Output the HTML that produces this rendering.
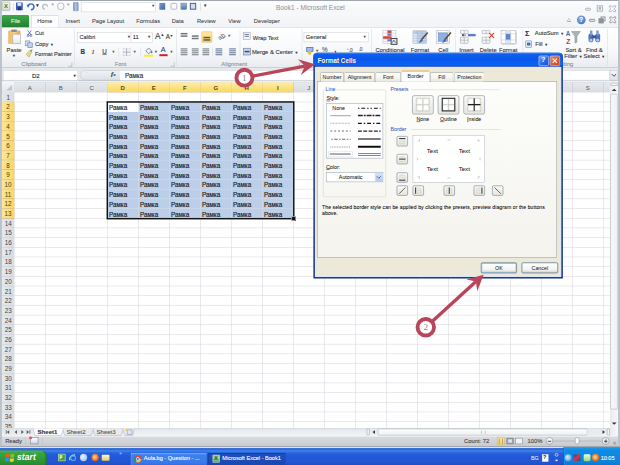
<!DOCTYPE html>
<html><head><meta charset="utf-8">
<style>
html,body{margin:0;padding:0;width:620px;height:465px;overflow:hidden;background:#fff;}
#s{position:absolute;left:0;top:0;width:1280px;height:960px;transform:scale(0.484375);transform-origin:0 0;overflow:hidden;background:#fff;font-family:"Liberation Sans",sans-serif;font-size:12px;color:#222;}
.a{position:absolute;}
.t{position:absolute;white-space:nowrap;-webkit-text-stroke:0.2px currentColor;}
/* window chrome */
#qat{left:0;top:0;width:1280px;height:27px;background:linear-gradient(#fdfdfe,#f4f6f8);border-top:2px solid #9da4ad;box-sizing:border-box;}
#tabs{left:0;top:27px;width:1280px;height:29px;background:linear-gradient(#f7f8fa,#f1f3f6);}
#ribbon{left:0;top:56px;width:1280px;height:85px;background:linear-gradient(#ffffff 0%,#f7f8fa 60%,#e9ecf0 100%);border-top:1px solid #c6cbd1;border-bottom:2px solid #b6bcc5;box-sizing:border-box;}
#fbar{left:0;top:141px;width:1280px;height:29px;background:linear-gradient(#e6e9ec,#e6e9ec 25px,#c6cbd1 25px,#c6cbd1 27px,#eef0f2 27px);}
#lb{left:0;top:0;width:4px;height:921px;background:#bcc2ca;}
#rb{left:1276px;top:0;width:4px;height:921px;background:#bcc2ca;}
/* grid */
#cells{left:30px;top:191px;width:1229px;height:694px;background-color:#fff;}
.gv{position:absolute;top:0;width:1px;height:694px;background:#d6d1dc;}
.gh{position:absolute;left:0;height:1px;width:1229px;background:#d6d1dc;}
#colh{left:30px;top:170px;width:1229px;height:21px;background:linear-gradient(#e6e9ec,#d9dde2);border-top:1px solid #c9ced4;border-bottom:1px solid #b9bec5;box-sizing:border-box;}
#rowh{left:4px;top:191px;width:26px;height:694px;background:linear-gradient(90deg,#e6e9ec,#d9dde2);border-right:1px solid #b9bec5;box-sizing:border-box;}
.ch{position:absolute;top:-1px;width:64px;height:21px;box-sizing:border-box;border-right:1px solid #bfc4ca;text-align:center;line-height:24px;font-size:12.5px;color:#50555c;}
.ch.y{background:linear-gradient(#fdeda6,#f9d961);border-right-color:#e0b54a;border-bottom:1px solid #d4a63a;color:#5b4a10;font-weight:bold;}
.rh{position:absolute;left:0;width:26px;height:20px;box-sizing:border-box;border-bottom:1px solid #c8ccd2;text-align:center;line-height:22px;font-size:13px;color:#3f444b;}
.rh.y{background:linear-gradient(90deg,#fce69a,#f8d862);border-bottom-color:#c9a03e;border-right:1px solid #d4a63a;color:#4a3c10;}
#corner{left:4px;top:170px;width:26px;height:21px;background:linear-gradient(#f3f4f6,#e4e7eb);border-right:1px solid #c5c9cf;border-bottom:1px solid #c5c9cf;box-sizing:border-box;}
#sel{left:222px;top:211px;width:384px;height:240px;background:#bccee8;}
.sv{position:absolute;top:0;width:1px;height:240px;background:#d3deee;}
.sh{position:absolute;left:0;height:1px;width:384px;background:#d3deee;}
#selb{left:220px;top:209px;width:388px;height:244px;border:3px solid #111;box-sizing:border-box;}
.cell{position:absolute;font-size:13px;color:#1a1a1a;line-height:20px;padding-top:2px;-webkit-text-stroke:0.3px #1a1a1a;}
#vsb{left:1259px;top:170px;width:17px;height:729px;background:linear-gradient(90deg,#e9ecef,#f6f7f8);}
#tabbar{left:4px;top:884px;width:1255px;height:15px;background:linear-gradient(#e3e7ec,#f1f3f5);border-top:1px solid #b8bec6;box-sizing:border-box;}
#status{left:0px;top:899px;width:1280px;height:24px;background:linear-gradient(#eceef0 0px,#eceef0 2px,#d8dadd 3px,#c9ccd1 21px,#a3a7ad 22px,#a3a7ad 24px);box-sizing:border-box;}
#task{left:0;top:923px;width:1280px;height:37px;background:linear-gradient(#e4ecfa 0px,#b9d0f5 2px,#3068d4 3px,#2f6ad8 5px,#3a86ee 8px,#2a62da 12px,#2458d8 18px,#2255d2 32px,#1d4cc4 37px);}
.xt{box-sizing:border-box;border:1px solid #919b9c;border-bottom:none;border-radius:3px 3px 0 0;background:linear-gradient(#ffffff,#f3f3ef 60%,#e8e7e0);font-size:11px;color:#111;text-align:center;line-height:19px;}
.xt.sel{background:#fcfcfe;border-top:3px solid #f2a53a;line-height:19px;height:25px;}
.pb{width:44px;height:39px;box-sizing:border-box;border:1.5px solid #566a80;border-radius:4px;background:linear-gradient(#fafaf7,#e8e6dc);box-shadow:inset 0 0 0 1px #fff;}
.pb svg{position:absolute;left:-1px;top:-1px;}
.bb{width:23px;height:21px;box-sizing:border-box;border:1.5px solid #566a80;border-radius:3px;background:linear-gradient(#fafaf7,#e6e4d8);}
.bb svg{position:absolute;left:-1px;top:-1px;}
.btn{box-sizing:border-box;border:1px solid #003c74;border-radius:3px;background:linear-gradient(#ffffff,#f4f3ee 70%,#d6d0c5);font-size:11px;color:#111;text-align:center;line-height:20px;}
.btn.foc{box-shadow:inset 0 0 0 2px #b9d1fa;}

.t.d{-webkit-text-stroke:0.08px currentColor;}
</style></head><body>
<div id="s">
<div class="a" id="qat"></div><div class="a" id="tabs"></div><div class="a" id="ribbon"></div><div class="a" id="fbar"></div><div class="a" id="corner"><svg style="position:absolute;left:0;top:0" width="26" height="21" viewBox="0 0 26 21"><path d="M21 5 L21 17 L9 17Z" fill="#c3c8ce"/></svg></div><div class="a" id="colh"><div class="ch" style="left:0px">A</div><div class="ch" style="left:64px">B</div><div class="ch" style="left:128px">C</div><div class="ch y" style="left:192px">D</div><div class="ch y" style="left:256px">E</div><div class="ch y" style="left:320px">F</div><div class="ch y" style="left:384px">G</div><div class="ch y" style="left:448px">H</div><div class="ch y" style="left:512px">I</div><div class="ch" style="left:576px">J</div><div class="ch" style="left:640px">K</div><div class="ch" style="left:704px">L</div><div class="ch" style="left:768px">M</div><div class="ch" style="left:832px">N</div><div class="ch" style="left:896px">O</div><div class="ch" style="left:960px">P</div><div class="ch" style="left:1024px">Q</div><div class="ch" style="left:1088px">R</div><div class="ch" style="left:1152px">S</div><div class="ch" style="left:1216px">T</div></div><div class="a" id="rowh"><div class="rh" style="top:0px">1</div><div class="rh y" style="top:20px">2</div><div class="rh y" style="top:40px">3</div><div class="rh y" style="top:60px">4</div><div class="rh y" style="top:80px">5</div><div class="rh y" style="top:100px">6</div><div class="rh y" style="top:120px">7</div><div class="rh y" style="top:140px">8</div><div class="rh y" style="top:160px">9</div><div class="rh y" style="top:180px">10</div><div class="rh y" style="top:200px">11</div><div class="rh y" style="top:220px">12</div><div class="rh y" style="top:240px">13</div><div class="rh" style="top:260px">14</div><div class="rh" style="top:280px">15</div><div class="rh" style="top:300px">16</div><div class="rh" style="top:320px">17</div><div class="rh" style="top:340px">18</div><div class="rh" style="top:360px">19</div><div class="rh" style="top:380px">20</div><div class="rh" style="top:400px">21</div><div class="rh" style="top:420px">22</div><div class="rh" style="top:440px">23</div><div class="rh" style="top:460px">24</div><div class="rh" style="top:480px">25</div><div class="rh" style="top:500px">26</div><div class="rh" style="top:520px">27</div><div class="rh" style="top:540px">28</div><div class="rh" style="top:560px">29</div><div class="rh" style="top:580px">30</div><div class="rh" style="top:600px">31</div><div class="rh" style="top:620px">32</div><div class="rh" style="top:640px">33</div><div class="rh" style="top:660px">34</div><div class="rh" style="top:680px">35</div></div><div class="a" id="cells"><div class="gv" style="left:63px"></div><div class="gv" style="left:127px"></div><div class="gv" style="left:191px"></div><div class="gv" style="left:255px"></div><div class="gv" style="left:319px"></div><div class="gv" style="left:383px"></div><div class="gv" style="left:447px"></div><div class="gv" style="left:511px"></div><div class="gv" style="left:575px"></div><div class="gv" style="left:639px"></div><div class="gv" style="left:703px"></div><div class="gv" style="left:767px"></div><div class="gv" style="left:831px"></div><div class="gv" style="left:895px"></div><div class="gv" style="left:959px"></div><div class="gv" style="left:1023px"></div><div class="gv" style="left:1087px"></div><div class="gv" style="left:1151px"></div><div class="gv" style="left:1215px"></div><div class="gv" style="left:1279px"></div><div class="gh" style="top:19px"></div><div class="gh" style="top:39px"></div><div class="gh" style="top:59px"></div><div class="gh" style="top:79px"></div><div class="gh" style="top:99px"></div><div class="gh" style="top:119px"></div><div class="gh" style="top:139px"></div><div class="gh" style="top:159px"></div><div class="gh" style="top:179px"></div><div class="gh" style="top:199px"></div><div class="gh" style="top:219px"></div><div class="gh" style="top:239px"></div><div class="gh" style="top:259px"></div><div class="gh" style="top:279px"></div><div class="gh" style="top:299px"></div><div class="gh" style="top:319px"></div><div class="gh" style="top:339px"></div><div class="gh" style="top:359px"></div><div class="gh" style="top:379px"></div><div class="gh" style="top:399px"></div><div class="gh" style="top:419px"></div><div class="gh" style="top:439px"></div><div class="gh" style="top:459px"></div><div class="gh" style="top:479px"></div><div class="gh" style="top:499px"></div><div class="gh" style="top:519px"></div><div class="gh" style="top:539px"></div><div class="gh" style="top:559px"></div><div class="gh" style="top:579px"></div><div class="gh" style="top:599px"></div><div class="gh" style="top:619px"></div><div class="gh" style="top:639px"></div><div class="gh" style="top:659px"></div><div class="gh" style="top:679px"></div><div class="gh" style="top:699px"></div></div><div class="a" id="sel"><div class="sv" style="left:63px"></div><div class="sv" style="left:127px"></div><div class="sv" style="left:191px"></div><div class="sv" style="left:255px"></div><div class="sv" style="left:319px"></div><div class="sh" style="top:19px"></div><div class="sh" style="top:39px"></div><div class="sh" style="top:59px"></div><div class="sh" style="top:79px"></div><div class="sh" style="top:99px"></div><div class="sh" style="top:119px"></div><div class="sh" style="top:139px"></div><div class="sh" style="top:159px"></div><div class="sh" style="top:179px"></div><div class="sh" style="top:199px"></div><div class="sh" style="top:219px"></div></div><div class="a" style="left:222px;top:211px;width:64px;height:20px;background:#fff"></div><div class="cell" style="left:225px;top:211px">Рамка</div><div class="cell" style="left:289px;top:211px">Рамка</div><div class="cell" style="left:353px;top:211px">Рамка</div><div class="cell" style="left:417px;top:211px">Рамка</div><div class="cell" style="left:481px;top:211px">Рамка</div><div class="cell" style="left:545px;top:211px">Рамка</div><div class="cell" style="left:225px;top:231px">Рамка</div><div class="cell" style="left:289px;top:231px">Рамка</div><div class="cell" style="left:353px;top:231px">Рамка</div><div class="cell" style="left:417px;top:231px">Рамка</div><div class="cell" style="left:481px;top:231px">Рамка</div><div class="cell" style="left:545px;top:231px">Рамка</div><div class="cell" style="left:225px;top:251px">Рамка</div><div class="cell" style="left:289px;top:251px">Рамка</div><div class="cell" style="left:353px;top:251px">Рамка</div><div class="cell" style="left:417px;top:251px">Рамка</div><div class="cell" style="left:481px;top:251px">Рамка</div><div class="cell" style="left:545px;top:251px">Рамка</div><div class="cell" style="left:225px;top:271px">Рамка</div><div class="cell" style="left:289px;top:271px">Рамка</div><div class="cell" style="left:353px;top:271px">Рамка</div><div class="cell" style="left:417px;top:271px">Рамка</div><div class="cell" style="left:481px;top:271px">Рамка</div><div class="cell" style="left:545px;top:271px">Рамка</div><div class="cell" style="left:225px;top:291px">Рамка</div><div class="cell" style="left:289px;top:291px">Рамка</div><div class="cell" style="left:353px;top:291px">Рамка</div><div class="cell" style="left:417px;top:291px">Рамка</div><div class="cell" style="left:481px;top:291px">Рамка</div><div class="cell" style="left:545px;top:291px">Рамка</div><div class="cell" style="left:225px;top:311px">Рамка</div><div class="cell" style="left:289px;top:311px">Рамка</div><div class="cell" style="left:353px;top:311px">Рамка</div><div class="cell" style="left:417px;top:311px">Рамка</div><div class="cell" style="left:481px;top:311px">Рамка</div><div class="cell" style="left:545px;top:311px">Рамка</div><div class="cell" style="left:225px;top:331px">Рамка</div><div class="cell" style="left:289px;top:331px">Рамка</div><div class="cell" style="left:353px;top:331px">Рамка</div><div class="cell" style="left:417px;top:331px">Рамка</div><div class="cell" style="left:481px;top:331px">Рамка</div><div class="cell" style="left:545px;top:331px">Рамка</div><div class="cell" style="left:225px;top:351px">Рамка</div><div class="cell" style="left:289px;top:351px">Рамка</div><div class="cell" style="left:353px;top:351px">Рамка</div><div class="cell" style="left:417px;top:351px">Рамка</div><div class="cell" style="left:481px;top:351px">Рамка</div><div class="cell" style="left:545px;top:351px">Рамка</div><div class="cell" style="left:225px;top:371px">Рамка</div><div class="cell" style="left:289px;top:371px">Рамка</div><div class="cell" style="left:353px;top:371px">Рамка</div><div class="cell" style="left:417px;top:371px">Рамка</div><div class="cell" style="left:481px;top:371px">Рамка</div><div class="cell" style="left:545px;top:371px">Рамка</div><div class="cell" style="left:225px;top:391px">Рамка</div><div class="cell" style="left:289px;top:391px">Рамка</div><div class="cell" style="left:353px;top:391px">Рамка</div><div class="cell" style="left:417px;top:391px">Рамка</div><div class="cell" style="left:481px;top:391px">Рамка</div><div class="cell" style="left:545px;top:391px">Рамка</div><div class="cell" style="left:225px;top:411px">Рамка</div><div class="cell" style="left:289px;top:411px">Рамка</div><div class="cell" style="left:353px;top:411px">Рамка</div><div class="cell" style="left:417px;top:411px">Рамка</div><div class="cell" style="left:481px;top:411px">Рамка</div><div class="cell" style="left:545px;top:411px">Рамка</div><div class="cell" style="left:225px;top:431px">Рамка</div><div class="cell" style="left:289px;top:431px">Рамка</div><div class="cell" style="left:353px;top:431px">Рамка</div><div class="cell" style="left:417px;top:431px">Рамка</div><div class="cell" style="left:481px;top:431px">Рамка</div><div class="cell" style="left:545px;top:431px">Рамка</div><div class="a" id="selb"></div><div class="a" style="left:602px;top:447px;width:7px;height:7px;background:#111;border:1px solid #fff;"></div><div class="a" id="vsb"></div><div class="a" id="tabbar"></div><div class="a" id="status"></div><div class="a" id="task"></div><div class="a" id="lb"></div><div class="a" id="rb"></div>

<!-- QAT / title row -->
<div class="a" style="left:4px;top:4px;width:17px;height:18px;background:linear-gradient(#f4f6f0,#d9ddd4);border:1.5px solid #7f8a80;border-radius:2px;box-sizing:border-box;"></div>
<div class="t" style="left:8px;top:5px;font-size:12px;font-weight:bold;color:#2d8a36;line-height:16px;">X</div>
<div class="a" style="left:27px;top:6px;width:1px;height:16px;background:#c3c8ce;"></div>
<div class="a" style="left:33px;top:5px;width:14px;height:16px;background:#3a5bb0;border-radius:1px;"></div>
<div class="a" style="left:36px;top:6px;width:8px;height:6px;background:#dfe6f3;"></div>
<div class="a" style="left:37px;top:15px;width:6px;height:6px;background:#1c3473;"></div>
<svg class="a" style="left:54px;top:4px" width="20" height="20" viewBox="0 0 20 20"><path d="M4 10 A6 6 0 1 1 10 16" fill="none" stroke="#3269c1" stroke-width="3"/><path d="M1 6 L7 6 L4 12 Z" fill="#3269c1"/></svg>
<div class="t" style="left:72px;top:5px;font-size:10px;color:#333;">▼</div>
<svg class="a" style="left:86px;top:5px" width="16" height="18" viewBox="0 0 16 18"><path d="M12 9 A5 5 0 1 0 7 14" fill="none" stroke="#b9bdc2" stroke-width="2.5"/></svg>
<div class="t" style="left:104px;top:5px;font-size:9px;color:#aaa;">▼</div>
<div class="a" style="left:118px;top:5px;width:15px;height:16px;border:2px solid #b5b9bf;border-radius:7px;box-sizing:border-box;"></div>
<div class="t" style="left:136px;top:5px;font-size:9px;color:#aaa;">▼</div>
<div class="a" style="left:151px;top:4px;width:11px;height:19px;background:linear-gradient(90deg,#6f8db8,#b4c7e1,#6f8db8);border-radius:2px;"></div>
<div class="a" style="left:168px;top:5px;width:154px;height:20px;background:#fff;border:1px solid #cbd0d6;box-sizing:border-box;"></div>
<div class="t" style="left:312px;top:8px;font-size:8px;color:#444;">▼</div>
<div class="a" style="left:329px;top:6px;width:12px;height:14px;background:linear-gradient(135deg,#7e9cc9,#3e64a8);"></div>
<div class="a" style="left:352px;top:6px;width:14px;height:14px;border:2px solid #b6babf;border-radius:3px;box-sizing:border-box;"></div>
<div class="a" style="left:373px;top:6px;width:13px;height:14px;background:linear-gradient(#9db7dd,#4a72b5);border:1px solid #51606f;box-sizing:border-box;"></div>
<div class="a" style="left:392px;top:6px;width:13px;height:14px;background:#d3dced;border:2px solid #52627a;box-sizing:border-box;"></div>
<div class="a" style="left:414px;top:6px;width:1px;height:16px;background:#c3c8ce;"></div>
<div class="t" style="left:419px;top:7px;font-size:9px;color:#333;">▼</div>
<div class="t" style="left:570px;top:8px;font-size:13.5px;color:#8d9197;-webkit-text-stroke:0;">Book1 - Microsoft Excel</div>
<!-- window buttons -->
<div class="a" style="left:1208px;top:16px;width:12px;height:6px;border:2px solid #aeb3b9;border-radius:2px;box-sizing:border-box;"></div>
<div class="a" style="left:1232px;top:11px;width:13px;height:13px;border:2px solid #aeb3b9;box-sizing:border-box;"></div>
<div class="a" style="left:1236px;top:14px;width:5px;height:6px;background:#aeb3b9;"></div>
<svg class="a" style="left:1256px;top:10px" width="17" height="16" viewBox="0 0 17 16"><path d="M2 2 L6 2 L8.5 5 L11 2 L15 2 L15 5 L11.5 8 L15 11 L15 14 L11 14 L8.5 11 L6 14 L2 14 L2 11 L5.5 8 L2 5Z" fill="none" stroke="#a9aeb5" stroke-width="1.6"/></svg>
<!-- second row controls -->
<div class="t" style="left:1171px;top:34px;font-size:11px;color:#8b9097;">△</div>
<div class="a" style="left:1191px;top:32px;width:18px;height:18px;border-radius:9px;background:radial-gradient(circle at 40% 35%,#8fb3ea,#2f63c2);"></div>
<div class="t" style="left:1196px;top:33px;font-size:13px;font-weight:bold;color:#fff;">?</div>
<div class="a" style="left:1216px;top:39px;width:13px;height:6px;border:2px solid #8e939a;border-radius:2px;box-sizing:border-box;"></div>
<div class="a" style="left:1240px;top:34px;width:10px;height:10px;border:2px solid #8e939a;box-sizing:border-box;"></div><div class="a" style="left:1236px;top:38px;width:10px;height:10px;background:#8e939a;border:2px solid #8e939a;box-sizing:border-box;"></div>
<svg class="a" style="left:1257px;top:33px" width="16" height="16" viewBox="0 0 16 16"><path d="M2 2 L5.5 2 L8 4.5 L10.5 2 L14 2 L14 5 L11 8 L14 11 L14 14 L10.5 14 L8 11.5 L5.5 14 L2 14 L2 11 L5 8 L2 5Z" fill="none" stroke="#8a8f96" stroke-width="1.8"/></svg>

<!-- tabs -->
<div class="a" style="left:4px;top:31px;width:56px;height:25px;background:linear-gradient(#3ea84a,#21822e);border-radius:3px 3px 0 0;"></div>
<div class="t" style="left:4px;top:31px;width:56px;text-align:center;line-height:25px;font-size:11.5px;color:#e6f5e6;padding-top:1px;">File</div>
<div class="a" style="left:64px;top:31px;width:57px;height:26px;background:linear-gradient(#ffffff,#fbfcfd);border:1px solid #c2c7cd;border-bottom:none;border-radius:3px 3px 0 0;box-sizing:border-box;"></div>
<div class="t" style="left:64px;top:31px;width:57px;text-align:center;line-height:25px;font-size:11.8px;color:#3a3a3a;padding-top:1px;-webkit-text-stroke:0.1px #3a3a3a;">Home</div>
<div class="t" style="left:130px;top:31px;width:40px;text-align:center;line-height:25px;font-size:11.8px;color:#3a3a3a;padding-top:1px;-webkit-text-stroke:0.1px #3a3a3a;">Insert</div>
<div class="t" style="left:183px;top:31px;width:80px;text-align:center;line-height:25px;font-size:11.8px;color:#3a3a3a;padding-top:1px;-webkit-text-stroke:0.1px #3a3a3a;">Page Layout</div>
<div class="t" style="left:266px;top:31px;width:80px;text-align:center;line-height:25px;font-size:11.8px;color:#3a3a3a;padding-top:1px;-webkit-text-stroke:0.1px #3a3a3a;">Formulas</div>
<div class="t" style="left:337px;top:31px;width:60px;text-align:center;line-height:25px;font-size:11.8px;color:#3a3a3a;padding-top:1px;-webkit-text-stroke:0.1px #3a3a3a;">Data</div>
<div class="t" style="left:396px;top:31px;width:60px;text-align:center;line-height:25px;font-size:11.8px;color:#3a3a3a;padding-top:1px;-webkit-text-stroke:0.1px #3a3a3a;">Review</div>
<div class="t" style="left:454px;top:31px;width:60px;text-align:center;line-height:25px;font-size:11.8px;color:#3a3a3a;padding-top:1px;-webkit-text-stroke:0.1px #3a3a3a;">View</div>
<div class="t" style="left:511px;top:31px;width:80px;text-align:center;line-height:25px;font-size:11.8px;color:#3a3a3a;padding-top:1px;-webkit-text-stroke:0.1px #3a3a3a;">Developer</div>
<!-- ribbon: clipboard -->
<div class="a" style="left:17px;top:63px;width:25px;height:28px;background:linear-gradient(90deg,#e9b962,#f6d28b 50%,#dca24b);border-radius:2px;"></div>
<div class="a" style="left:23px;top:61px;width:12px;height:5px;background:#8a8f96;border-radius:2px;"></div>
<div class="a" style="left:26px;top:70px;width:17px;height:21px;background:linear-gradient(#ffffff,#e5e9ee);border:1px solid #9ea6b0;box-sizing:border-box;"></div>
<div class="t" style="left:10px;top:96px;width:38px;text-align:center;font-size:12px;color:#333;">Paste</div>
<div class="t" style="left:25px;top:111px;font-size:8px;color:#444;">▼</div>
<svg class="a" style="left:55px;top:62px" width="12" height="14" viewBox="0 0 14 16"><path d="M3 1 L10 11 M11 1 L4 11" stroke="#5567b8" stroke-width="2"/><circle cx="3.5" cy="13" r="2.5" fill="none" stroke="#3f4fa6" stroke-width="1.8"/><circle cx="10.5" cy="13" r="2.5" fill="none" stroke="#3f4fa6" stroke-width="1.8"/></svg>
<div class="t" style="left:72px;top:61px;font-size:12px;color:#333;">Cut</div>
<div class="a" style="left:52px;top:84px;width:10px;height:11px;background:#dbe4f2;border:1px solid #5d7bb3;box-sizing:border-box;"></div>
<div class="a" style="left:57px;top:88px;width:10px;height:11px;background:#c5d3ea;border:1px solid #4a6aa8;box-sizing:border-box;"></div>
<div class="t" style="left:72px;top:84px;font-size:12px;color:#333;">Copy <span style="font-size:8px">▼</span></div>
<svg class="a" style="left:52px;top:102px" width="16" height="16" viewBox="0 0 16 16"><path d="M2 10 L8 16 L14 4 L10 2 Z" fill="#e2e08a" stroke="#8a8a3a" stroke-width="1"/><path d="M11 3 L15 0" stroke="#444" stroke-width="2"/></svg>
<div class="t" style="left:72px;top:105px;font-size:11.5px;color:#333;">Format Painter</div>
<div class="t" style="left:44px;top:126px;font-size:12px;color:#8a9099;">Clipboard</div>
<div class="a" style="left:141px;top:129px;width:7px;height:7px;border-right:1px solid #999;border-bottom:1px solid #999;"></div>
<div class="a" style="left:153px;top:60px;width:1px;height:76px;background:#d4d8dd;"></div>
<!-- font group -->
<div class="a" style="left:160px;top:67px;width:111px;height:21px;background:#fff;border:1px solid #c9ced4;box-sizing:border-box;"></div>
<div class="t" style="left:164px;top:70px;font-size:11.5px;color:#333;">Calibri</div>
<div class="t" style="left:262px;top:72px;font-size:8px;color:#444;">▼</div>
<div class="a" style="left:270px;top:67px;width:45px;height:21px;background:#fff;border:1px solid #c9ced4;box-sizing:border-box;"></div>
<div class="t" style="left:274px;top:70px;font-size:12px;color:#333;">11</div>
<div class="t" style="left:304px;top:72px;font-size:8px;color:#444;">▼</div>
<div class="t" style="left:320px;top:66px;font-size:17px;color:#333;">A<sup style="font-size:8px">▲</sup></div>
<div class="t" style="left:342px;top:69px;font-size:13px;color:#333;">A<sup style="font-size:7px">▼</sup></div>
<div class="t" style="left:166px;top:99px;font-size:13px;font-weight:bold;color:#333;">B</div>
<div class="t" style="left:190px;top:99px;font-size:13px;font-style:italic;font-family:'Liberation Serif',serif;color:#333;">I</div>
<div class="t" style="left:211px;top:99px;font-size:13px;text-decoration:underline;color:#333;">U</div>
<div class="t" style="left:230px;top:102px;font-size:8px;color:#555;">▼</div>
<div class="a" style="left:244px;top:99px;width:1px;height:18px;background:#d4d8dd;"></div>
<div class="a" style="left:254px;top:100px;width:15px;height:15px;border:1px dotted #9aa0a8;box-sizing:border-box;background:linear-gradient(90deg,transparent 6px,#aab 6px,#aab 7px,transparent 7px),linear-gradient(transparent 6px,#aab 6px,#aab 7px,transparent 7px);"></div>
<div class="t" style="left:274px;top:102px;font-size:8px;color:#555;">▼</div>
<div class="a" style="left:289px;top:99px;width:1px;height:18px;background:#d4d8dd;"></div>
<svg class="a" style="left:297px;top:96px" width="20" height="22" viewBox="0 0 20 22"><path d="M4 9 L10 3 L16 9 L10 15 Z" fill="#f0f2f5" stroke="#5b6e8c" stroke-width="1.5"/><circle cx="16" cy="12" r="2" fill="#4a78c0"/><rect x="1" y="17" width="18" height="4" fill="#ffec1f"/></svg>
<div class="t" style="left:318px;top:102px;font-size:8px;color:#555;">▼</div>
<div class="t" style="left:332px;top:94px;font-size:15px;color:#2a3e7a;">A</div>
<div class="a" style="left:329px;top:112px;width:17px;height:4px;background:#d71920;"></div>
<div class="t" style="left:350px;top:102px;font-size:8px;color:#555;">▼</div>
<div class="t" style="left:237px;top:126px;font-size:12px;color:#8a9099;">Font</div>
<div class="a" style="left:352px;top:129px;width:7px;height:7px;border-right:1px solid #999;border-bottom:1px solid #999;"></div>
<div class="a" style="left:364px;top:60px;width:1px;height:76px;background:#d4d8dd;"></div>
<!-- alignment group -->
<div class="a" style="left:373px;top:68px;width:14px;height:3px;background:#6d737b;"></div>
<div class="a" style="left:373px;top:73px;width:14px;height:3px;background:#6d737b;"></div>
<div class="a" style="left:396px;top:73px;width:14px;height:3px;background:#6d737b;"></div>
<div class="a" style="left:396px;top:78px;width:14px;height:3px;background:#6d737b;"></div>
<div class="a" style="left:416px;top:65px;width:22px;height:23px;background:linear-gradient(#fde9a6,#f9d163);border:1px solid #d8b04d;border-radius:2px;box-sizing:border-box;"></div>
<div class="a" style="left:420px;top:76px;width:14px;height:3px;background:#555;"></div>
<div class="a" style="left:420px;top:81px;width:14px;height:3px;background:#555;"></div>
<svg class="a" style="left:448px;top:64px" width="20" height="20" viewBox="0 0 20 20"><text x="1" y="16" font-size="13" fill="#555" font-family="Liberation Sans" transform="rotate(-35 8 10)">ab</text><path d="M12 16 L17 11" stroke="#4a6fb0" stroke-width="2"/></svg>
<div class="t" style="left:469px;top:70px;font-size:8px;color:#555;">▼</div>
<div class="a" style="left:373px;top:100px;width:14px;height:2px;background:#6d737b;box-shadow:0 4px 0 #6d737b,0 8px 0 #6d737b,0 12px 0 #6d737b;"></div>
<div class="a" style="left:396px;top:100px;width:14px;height:2px;background:#6d737b;box-shadow:0 4px 0 #6d737b,0 8px 0 #6d737b,0 12px 0 #6d737b;"></div>
<div class="a" style="left:418px;top:100px;width:14px;height:2px;background:#6d737b;box-shadow:0 4px 0 #6d737b,0 8px 0 #6d737b,0 12px 0 #6d737b;"></div>
<div class="a" style="left:438px;top:96px;width:1px;height:20px;background:#d4d8dd;"></div>
<div class="a" style="left:445px;top:100px;width:14px;height:2px;background:#5b6f8f;box-shadow:0 4px 0 #5b6f8f,0 8px 0 #5b6f8f,0 12px 0 #5b6f8f;"></div>
<div class="a" style="left:473px;top:100px;width:14px;height:2px;background:#5b6f8f;box-shadow:0 4px 0 #5b6f8f,0 8px 0 #5b6f8f,0 12px 0 #5b6f8f;"></div>
<div class="a" style="left:495px;top:62px;width:1px;height:56px;background:#d4d8dd;"></div>
<div class="a" style="left:502px;top:66px;width:15px;height:16px;background:#f3f5f8;border:1px solid #8d96a3;box-sizing:border-box;"></div>
<div class="a" style="left:505px;top:70px;width:9px;height:2px;background:#6a7a93;box-shadow:0 4px 0 #6a7a93;"></div>
<div class="t" style="left:522px;top:71px;font-size:11.8px;color:#333;">Wrap Text</div>
<div class="a" style="left:502px;top:99px;width:16px;height:15px;background:#c9d6ea;border:1px solid #5a6d8b;box-sizing:border-box;"></div>
<div class="a" style="left:505px;top:105px;width:10px;height:3px;background:#394b6c;"></div>
<div class="t" style="left:520px;top:100px;font-size:12px;color:#333;">Merge &amp; Center <span style="font-size:8px">▼</span></div>
<div class="t" style="left:457px;top:126px;font-size:12px;color:#8a9099;">Alignment</div>
<div class="a" style="left:611px;top:129px;width:7px;height:7px;border-right:1px solid #999;border-bottom:1px solid #999;"></div>
<div class="a" style="left:623px;top:60px;width:1px;height:76px;background:#d4d8dd;"></div>
<!-- number group -->
<div class="a" style="left:627px;top:67px;width:134px;height:20px;background:#fff;border:1px solid #c9ced4;box-sizing:border-box;"></div>
<div class="t" style="left:631px;top:70px;font-size:12px;color:#333;">General</div>
<div class="t" style="left:749px;top:72px;font-size:8px;color:#444;">▼</div>
<svg class="a" style="left:631px;top:94px" width="20" height="20" viewBox="0 0 20 20"><rect x="1" y="3" width="15" height="10" fill="#5c83c4"/><rect x="3" y="5" width="11" height="6" fill="#a9c0e3"/><circle cx="8" cy="15" r="4" fill="#e8c23a"/></svg>
<div class="t" style="left:651px;top:100px;font-size:8px;color:#555;">▼</div>
<div class="t" style="left:665px;top:96px;font-size:13px;color:#555;">%</div>
<div class="t" style="left:690px;top:94px;font-size:16px;font-weight:bold;color:#333;">,</div>
<div class="t" style="left:717px;top:96px;font-size:10px;color:#555;">⁺.0</div>
<div class="t" style="left:740px;top:96px;font-size:10px;color:#555;">.0</div>
<div class="a" style="left:766px;top:60px;width:1px;height:76px;background:#d4d8dd;"></div>
<!-- styles group -->
<svg class="a" style="left:788px;top:61px" width="34" height="32" viewBox="0 0 34 32">
<rect x="2.5" y="1.5" width="27" height="27" fill="#fff" stroke="#aeb6c0"/>
<g stroke="#aeb6c0"><line x1="11.5" y1="2" x2="11.5" y2="28"/><line x1="20.5" y1="2" x2="20.5" y2="28"/><line x1="3" y1="7.5" x2="29" y2="7.5"/><line x1="3" y1="13.5" x2="29" y2="13.5"/><line x1="3" y1="19.5" x2="29" y2="19.5"/><line x1="3" y1="24.5" x2="29" y2="24.5"/></g>
<rect x="12" y="2" width="8" height="5" fill="#d9403a"/><rect x="12" y="8" width="8" height="5" fill="#5b83c9"/><rect x="3" y="14" width="17" height="5" fill="#d9403a"/><rect x="12" y="20" width="8" height="4" fill="#5b83c9"/>
<rect x="19.5" y="18.5" width="12" height="12" fill="#e8eaee" stroke="#3a3f47" stroke-width="2"/><path d="M22 27 L25 22 L29 27" stroke="#333" fill="none" stroke-width="1.5"/>
</svg>
<div class="t" style="left:769px;top:96px;width:72px;text-align:center;font-size:12px;color:#333;">Conditional</div>
<svg class="a" style="left:850px;top:61px" width="36" height="32" viewBox="0 0 36 32">
<rect x="2.5" y="2.5" width="28" height="26" fill="#e4ecf8" stroke="#9aa9c0"/>
<rect x="3" y="3" width="27" height="5" fill="#b9cbe8"/>
<rect x="12" y="8" width="18" height="20" fill="#c2d3ef"/>
<g stroke="#9aa9c0"><line x1="11.5" y1="3" x2="11.5" y2="28"/><line x1="21.5" y1="3" x2="21.5" y2="28"/><line x1="3" y1="8.5" x2="30" y2="8.5"/><line x1="3" y1="13.5" x2="30" y2="13.5"/><line x1="3" y1="18.5" x2="30" y2="18.5"/><line x1="3" y1="23.5" x2="30" y2="23.5"/></g>
<path d="M33 6 L20 21" stroke="#5a4632" stroke-width="3"/><path d="M14 29 L19 20 L23 23 Z" fill="#3d5fa3"/>
</svg>
<div class="t" style="left:837px;top:96px;width:60px;text-align:center;font-size:12px;color:#333;">Format</div>
<svg class="a" style="left:898px;top:61px" width="36" height="32" viewBox="0 0 36 32">
<rect x="2.5" y="2.5" width="28" height="26" fill="#fff" stroke="#9aa9c0"/>
<g stroke="#c5cdd8"><line x1="3" y1="6.5" x2="30" y2="6.5"/><line x1="3" y1="24.5" x2="30" y2="24.5"/><line x1="6.5" y1="3" x2="6.5" y2="28"/><line x1="26.5" y1="3" x2="26.5" y2="28"/></g>
<rect x="7" y="7" width="19" height="17" fill="#8fb0e6" stroke="#5c7fc0"/>
<path d="M33 6 L20 21" stroke="#5a4632" stroke-width="3"/><path d="M14 29 L19 20 L23 23 Z" fill="#3d5fa3"/>
</svg>
<div class="t" style="left:885px;top:96px;width:60px;text-align:center;font-size:12px;color:#333;">Cell</div>
<div class="a" style="left:940px;top:60px;width:1px;height:76px;background:#d4d8dd;"></div>
<!-- cells group -->
<svg class="a" style="left:948px;top:61px" width="36" height="30" viewBox="0 0 36 30">
<g fill="#f4f5f7" stroke="#8d949d"><rect x="2.5" y="1.5" width="16" height="7" rx="1.5"/><rect x="2.5" y="15.5" width="16" height="13" rx="1.5"/></g>
<g stroke="#8d949d"><line x1="10.5" y1="2" x2="10.5" y2="8"/><line x1="10.5" y1="16" x2="10.5" y2="28"/><line x1="3" y1="22" x2="18" y2="22"/></g>
<rect x="18" y="9" width="16" height="5" fill="#5b80c6"/><path d="M6 11.5 L14 11.5" stroke="#333" stroke-width="1.5"/><path d="M5 11.5 L9 8.5 L9 14.5Z" fill="#333"/>
</svg>
<div class="t" style="left:938px;top:96px;width:50px;text-align:center;font-size:12px;color:#333;">Insert</div>
<svg class="a" style="left:993px;top:61px" width="34" height="30" viewBox="0 0 34 30">
<g fill="#f4f5f7" stroke="#8d949d"><rect x="2.5" y="1.5" width="16" height="7" rx="1.5"/><rect x="2.5" y="15.5" width="16" height="13" rx="1.5"/></g>
<g stroke="#8d949d"><line x1="10.5" y1="2" x2="10.5" y2="8"/><line x1="10.5" y1="16" x2="10.5" y2="28"/><line x1="3" y1="22" x2="18" y2="22"/></g>
<path d="M17 7 L27 17 M27 7 L17 17" stroke="#d63a2c" stroke-width="2.2"/>
</svg>
<div class="t" style="left:983px;top:96px;width:50px;text-align:center;font-size:12px;color:#333;">Delete</div>
<svg class="a" style="left:1032px;top:61px" width="36" height="32" viewBox="0 0 36 32">
<rect x="2.5" y="1.5" width="30" height="27" fill="#fff" stroke="#98a2ad"/>
<rect x="12" y="2" width="10" height="26" fill="#dbe5f5"/><rect x="12" y="9" width="10" height="12" fill="#5c85cf"/>
<g stroke="#b9c0c9"><line x1="11.5" y1="2" x2="11.5" y2="28"/><line x1="22.5" y1="2" x2="22.5" y2="28"/><line x1="3" y1="8.5" x2="32" y2="8.5"/><line x1="3" y1="21.5" x2="32" y2="21.5"/></g>
<path d="M4 30.5 L33 30.5 M34.5 4 L34.5 30" stroke="#c3c8ce" stroke-width="1.5"/>
</svg>
<div class="t" style="left:1024px;top:96px;width:50px;text-align:center;font-size:12px;color:#333;">Format</div>
<div class="a" style="left:1079px;top:60px;width:1px;height:76px;background:#d4d8dd;"></div>
<!-- editing group -->
<div class="t" style="left:1084px;top:61px;font-size:15px;font-weight:bold;color:#333;">Σ</div>
<div class="t" style="left:1104px;top:62px;font-size:12px;color:#333;">AutoSum <span style="font-size:8px">▼</span></div>
<div class="a" style="left:1085px;top:84px;width:13px;height:14px;background:#e7eef8;border:1px solid #4a74b8;box-sizing:border-box;"></div>
<div class="a" style="left:1088px;top:88px;width:7px;height:6px;background:#3a6fc0;"></div>
<div class="t" style="left:1105px;top:84px;font-size:12px;color:#333;">Fill <span style="font-size:8px">▼</span></div>
<svg class="a" style="left:1168px;top:61px" width="32" height="32" viewBox="0 0 32 32"><text x="0" y="13" font-size="13" font-weight="bold" fill="#4469b0" font-family="Liberation Sans">A</text><text x="1" y="29" font-size="14" font-weight="bold" fill="#c0392b" font-family="Liberation Sans">Z</text><path d="M12 4 L30 4 L23 14 L23 26 L19 28 L19 14 Z" fill="#aab3bd" stroke="#7b848e" stroke-width="1"/></svg>
<div class="t" style="left:1159px;top:97px;width:50px;text-align:center;font-size:12px;color:#333;">Sort &amp;</div>
<div class="t" style="left:1159px;top:109px;width:50px;text-align:center;font-size:12px;color:#333;">Filter <span style="font-size:8px">▼</span></div>
<svg class="a" style="left:1212px;top:61px" width="30" height="30" viewBox="0 0 30 30"><rect x="3" y="8" width="10" height="18" rx="4" fill="#4f73b5"/><rect x="17" y="8" width="10" height="18" rx="4" fill="#4f73b5"/><rect x="6" y="2" width="5" height="10" fill="#7e9acb"/><rect x="19" y="2" width="5" height="10" fill="#7e9acb"/><rect x="11" y="12" width="8" height="6" fill="#39589a"/><circle cx="8" cy="22" r="3" fill="#b9cbe8"/><circle cx="22" cy="22" r="3" fill="#b9cbe8"/></svg>
<div class="t" style="left:1202px;top:97px;width:50px;text-align:center;font-size:12px;color:#333;">Find &amp;</div>
<div class="t" style="left:1202px;top:109px;width:50px;text-align:center;font-size:12px;color:#333;">Select <span style="font-size:8px">▼</span></div>
<div class="t" style="left:1147px;top:126px;font-size:12px;color:#8a9099;">Editing</div>
<div class="a" style="left:1254px;top:60px;width:1px;height:76px;background:#d4d8dd;"></div>

<!-- formula bar -->
<div class="a" style="left:6px;top:145px;width:155px;height:21px;background:#fff;border:1px solid #c9ced4;box-sizing:border-box;"></div>
<div class="t" style="left:66px;top:150px;font-size:12.5px;color:#222;">D2</div>
<div class="t" style="left:150px;top:151px;font-size:8px;color:#222;">▼</div>
<div class="a" style="left:165px;top:145px;width:90px;height:21px;background:linear-gradient(#f0f2f5,#dde1e6);border:1px solid #bcc2ca;border-radius:10px 0 0 10px;box-sizing:border-box;"></div>
<div class="t" style="left:178px;top:145px;font-size:9px;color:#999;">⁻</div>
<div class="t" style="left:229px;top:145px;font-size:14px;font-style:italic;font-family:'Liberation Serif',serif;font-weight:bold;color:#333;">f<span style="font-size:10px">x</span></div>
<div class="a" style="left:248px;top:145px;width:1011px;height:21px;background:#fff;border:1px solid #c9ced4;border-left:none;box-sizing:border-box;"></div>
<div class="t" style="left:258px;top:148px;font-size:13px;color:#222;">Рамка</div>
<div class="a" style="left:1259px;top:145px;width:17px;height:21px;background:linear-gradient(#f4f6f8,#dfe3e8);border:1px solid #c9ced4;box-sizing:border-box;"></div>
<svg class="a" style="left:1259px;top:145px" width="17" height="21" viewBox="0 0 17 21"><path d="M4 8 L8.5 12.5 L13 8" fill="none" stroke="#444" stroke-width="2"/></svg>

<!-- Format Cells dialog -->
<div class="a" style="left:647px;top:109px;width:515px;height:466px;background:#0e2c8c;border-radius:8px 8px 0 0;"></div>
<div class="a" style="left:647px;top:109px;width:515px;height:29px;border-radius:8px 8px 0 0;background:linear-gradient(#3d8cf7 0%,#0d5ff0 12%,#0856ea 45%,#0a63f6 85%,#0751e0 95%,#0339c4 100%);"></div>
<div class="a" style="left:650px;top:138px;width:509px;height:434px;background:#dce8fa;"></div>
<div class="a" style="left:652px;top:138px;width:505px;height:431px;background:#ece9d8;"></div>
<div class="t d" style="left:656px;top:118px;font-size:13px;font-weight:bold;color:#fff;text-shadow:1px 1px 0 #0a246a;">Format Cells</div>
<div class="a" style="left:1112px;top:115px;width:21px;height:21px;border:1px solid #fff;border-radius:3px;box-sizing:border-box;background:linear-gradient(135deg,#6d9ef9,#2a63e3 60%,#1f50c8);"></div>
<div class="t d" style="left:1117px;top:115px;font-size:15px;font-weight:bold;color:#fff;">?</div>
<div class="a" style="left:1135px;top:115px;width:21px;height:21px;border:1px solid #fff;border-radius:3px;box-sizing:border-box;background:linear-gradient(135deg,#f08b6c,#e35a2c 55%,#c84620);"></div>
<svg class="a" style="left:1135px;top:115px" width="21" height="21" viewBox="0 0 21 21"><path d="M6 6 L15 15 M15 6 L6 15" stroke="#fff" stroke-width="2.2"/></svg>

<!-- tabs -->
<div class="a" style="left:655px;top:168px;width:495px;height:364px;background:linear-gradient(#fdfdfb,#f4f3ee);border:1px solid #919b9c;box-sizing:border-box;"></div>
<div class="a xt" style="left:661px;top:149px;width:49px;height:20px;">Number</div>
<div class="a xt" style="left:711px;top:149px;width:63px;height:20px;">Alignment</div>
<div class="a xt" style="left:775px;top:149px;width:53px;height:20px;">Font</div>
<div class="a xt sel" style="left:829px;top:145px;width:58px;height:24px;">Border</div>
<div class="a xt" style="left:888px;top:149px;width:48px;height:20px;">Fill</div>
<div class="a xt" style="left:938px;top:149px;width:62px;height:20px;">Protection</div>

<!-- line group -->
<div class="a" style="left:667px;top:185px;width:130px;height:222px;border:1px solid #d0d0bf;border-radius:3px;box-sizing:border-box;"></div>
<div class="t d" style="left:670px;top:178px;padding:0 2px;background:#fbfbf9;font-size:11px;color:#2f63c0;">Line</div>
<div class="t d" style="left:674px;top:197px;font-size:11px;color:#111;"><u>S</u>tyle:</div>
<div class="a" style="left:674px;top:213px;width:117px;height:114px;background:#fff;border:1px solid #8a9aab;box-sizing:border-box;"></div>
<div class="t d" style="left:686px;top:217px;font-size:11px;color:#111;">None</div>
<svg class="a" style="left:674px;top:213px" width="117" height="114" viewBox="0 0 117 114">
 <g fill="none">
 <line x1="8" y1="25.5" x2="50" y2="25.5" stroke="#b5b5b5" stroke-width="2.5"/>
 <line x1="8" y1="41.5" x2="50" y2="41.5" stroke="#555" stroke-width="1.2" stroke-dasharray="1.5 1.5"/>
 <line x1="8" y1="57.5" x2="50" y2="57.5" stroke="#333" stroke-width="1.5" stroke-dasharray="4 4"/>
 <line x1="10" y1="74.5" x2="50" y2="74.5" stroke="#333" stroke-width="1.5" stroke-dasharray="3 3 7 3"/>
 <line x1="8" y1="90.5" x2="50" y2="90.5" stroke="#999" stroke-width="2.5" stroke-dasharray="2 1.5"/>
 <rect x="4.5" y="99.5" width="49" height="11" stroke="#aaa" stroke-dasharray="1 1"/>
 <line x1="7" y1="105" x2="50" y2="105" stroke="#555" stroke-width="2"/>
 <line x1="65" y1="10.5" x2="112" y2="10.5" stroke="#111" stroke-width="2.5" stroke-dasharray="3 4 8 4 3 4"/>
 <line x1="65" y1="25.5" x2="112" y2="25.5" stroke="#222" stroke-width="3" stroke-dasharray="10 2 4 2"/>
 <line x1="65" y1="41.5" x2="112" y2="41.5" stroke="#111" stroke-width="2.5" stroke-dasharray="8 4 3 4"/>
 <line x1="65" y1="57.5" x2="112" y2="57.5" stroke="#222" stroke-width="2.5" stroke-dasharray="8 3"/>
 <line x1="65" y1="74" x2="112" y2="74" stroke="#505050" stroke-width="3"/>
 <line x1="65" y1="90" x2="112" y2="90" stroke="#111" stroke-width="4"/>
 <line x1="65" y1="104" x2="112" y2="104" stroke="#555" stroke-width="1.5"/>
 <line x1="65" y1="108" x2="112" y2="108" stroke="#555" stroke-width="1.5"/>
 </g>
</svg>
<div class="t d" style="left:673px;top:339px;font-size:11px;color:#111;"><u>C</u>olor:</div>
<div class="a" style="left:674px;top:356px;width:117px;height:20px;background:#fff;border:1px solid #8a9aab;box-sizing:border-box;"></div>
<div class="t d" style="left:674px;top:360px;width:100px;text-align:center;font-size:11px;color:#111;">Automatic</div>
<div class="a" style="left:774px;top:357px;width:16px;height:18px;background:linear-gradient(#d6e2fb,#b3c8f5);border-left:1px solid #c3d0ee;box-sizing:border-box;"></div>
<svg class="a" style="left:774px;top:357px" width="16" height="18" viewBox="0 0 16 18"><path d="M4 7 L8 11 L12 7" fill="none" stroke="#4d6185" stroke-width="2"/></svg>

<!-- presets -->
<div class="t d" style="left:806px;top:178px;font-size:11px;color:#2f63c0;">Presets</div>
<div class="a" style="left:849px;top:185px;width:184px;height:1px;background:#d0d0bf;"></div>
<div class="a pb" style="left:851px;top:197px;"><svg width="44" height="39" viewBox="0 0 44 39"><rect x="8.5" y="5.5" width="27" height="27" fill="#e9e9e4" stroke="#9a9a94" stroke-dasharray="1.5 1.2"/><rect x="11" y="8" width="9" height="9" fill="#fff"/><rect x="24" y="8" width="9" height="9" fill="#fff"/><rect x="11" y="21" width="9" height="9" fill="#fff"/><rect x="24" y="21" width="9" height="9" fill="#fff"/><line x1="22" y1="6" x2="22" y2="32" stroke="#9a9a94" stroke-dasharray="1.5 1.2"/><line x1="9" y1="19" x2="35" y2="19" stroke="#9a9a94" stroke-dasharray="1.5 1.2"/></svg></div>
<div class="a pb" style="left:904px;top:197px;"><svg width="44" height="39" viewBox="0 0 44 39"><rect x="9" y="6" width="26" height="26" fill="#e9e9e4" stroke="#222" stroke-width="2.2"/><rect x="11" y="8" width="9" height="9" fill="#fff"/><rect x="24" y="8" width="9" height="9" fill="#fff"/><rect x="11" y="21" width="9" height="9" fill="#fff"/><rect x="24" y="21" width="9" height="9" fill="#fff"/><line x1="22" y1="7" x2="22" y2="31" stroke="#9a9a94" stroke-dasharray="1.5 1.2"/><line x1="10" y1="19" x2="34" y2="19" stroke="#9a9a94" stroke-dasharray="1.5 1.2"/></svg></div>
<div class="a pb" style="left:957px;top:197px;"><svg width="44" height="39" viewBox="0 0 44 39"><rect x="8.5" y="5.5" width="27" height="27" fill="#e9e9e4" stroke="#9a9a94" stroke-dasharray="1.5 1.2"/><rect x="11" y="8" width="9" height="9" fill="#fff"/><rect x="24" y="8" width="9" height="9" fill="#fff"/><rect x="11" y="21" width="9" height="9" fill="#fff"/><rect x="24" y="21" width="9" height="9" fill="#fff"/><line x1="22" y1="6" x2="22" y2="32" stroke="#222" stroke-width="2.2"/><line x1="9" y1="19" x2="35" y2="19" stroke="#222" stroke-width="2.2"/></svg></div>
<div class="t d" style="left:851px;top:240px;width:44px;text-align:center;font-size:11px;color:#111;"><u>N</u>one</div>
<div class="t d" style="left:901px;top:240px;width:50px;text-align:center;font-size:11px;color:#111;"><u>O</u>utline</div>
<div class="t d" style="left:957px;top:240px;width:44px;text-align:center;font-size:11px;color:#111;"><u>I</u>nside</div>

<!-- border -->
<div class="t d" style="left:806px;top:260px;font-size:11px;color:#2f63c0;">Border</div>
<div class="a" style="left:849px;top:267px;width:184px;height:1px;background:#d0d0bf;"></div>
<div class="a" style="left:852px;top:279px;width:149px;height:98px;background:#fff;border:1px solid #a9b3bd;box-sizing:border-box;"></div>
<svg class="a" style="left:852px;top:279px" width="149" height="98" viewBox="0 0 149 98"><g stroke="#999" fill="none"><path d="M14 8 L14 12 L10 12"/><path d="M135 8 L135 12 L139 12"/><path d="M14 90 L14 86 L10 86"/><path d="M135 90 L135 86 L139 86"/><path d="M72 8 L75 11 L78 8"/><path d="M72 90 L75 87 L78 90"/><path d="M8 46 L11 49 L8 52"/><path d="M141 46 L138 49 L141 52"/></g></svg>
<div class="t d" style="left:881px;top:304px;font-size:12.5px;color:#111;">Text</div>
<div class="t d" style="left:947px;top:304px;font-size:12.5px;color:#111;">Text</div>
<div class="t d" style="left:881px;top:343px;font-size:12.5px;color:#111;">Text</div>
<div class="t d" style="left:947px;top:343px;font-size:12.5px;color:#111;">Text</div>
<div class="a bb" style="left:819px;top:281px;"><svg width="23" height="21" viewBox="0 0 23 21"><rect x="6.5" y="5.5" width="10" height="10" fill="#f4f4ee" stroke="#999" stroke-dasharray="1 1"/><line x1="11.5" y1="6" x2="11.5" y2="16" stroke="#aaa" stroke-dasharray="1 1"/><line x1="7" y1="10.5" x2="16" y2="10.5" stroke="#aaa" stroke-dasharray="1 1"/><line x1="5" y1="5" x2="18" y2="5" stroke="#333" stroke-width="2"/></svg></div>
<div class="a bb" style="left:819px;top:318px;"><svg width="23" height="21" viewBox="0 0 23 21"><rect x="6.5" y="5.5" width="10" height="10" fill="#f4f4ee" stroke="#999" stroke-dasharray="1 1"/><line x1="11.5" y1="6" x2="11.5" y2="16" stroke="#aaa" stroke-dasharray="1 1"/><line x1="7" y1="10.5" x2="16" y2="10.5" stroke="#aaa" stroke-dasharray="1 1"/><line x1="5" y1="10.5" x2="18" y2="10.5" stroke="#333" stroke-width="2"/></svg></div>
<div class="a bb" style="left:819px;top:356px;"><svg width="23" height="21" viewBox="0 0 23 21"><rect x="6.5" y="5.5" width="10" height="10" fill="#f4f4ee" stroke="#999" stroke-dasharray="1 1"/><line x1="11.5" y1="6" x2="11.5" y2="16" stroke="#aaa" stroke-dasharray="1 1"/><line x1="7" y1="10.5" x2="16" y2="10.5" stroke="#aaa" stroke-dasharray="1 1"/><line x1="5" y1="16" x2="18" y2="16" stroke="#333" stroke-width="2"/></svg></div>
<div class="a bb" style="left:819px;top:383px;"><svg width="23" height="21" viewBox="0 0 23 21"><line x1="5" y1="17" x2="18" y2="4" stroke="#333" stroke-width="1.5"/></svg></div>
<div class="a bb" style="left:852px;top:383px;"><svg width="23" height="21" viewBox="0 0 23 21"><rect x="6.5" y="5.5" width="10" height="10" fill="#f4f4ee" stroke="#999" stroke-dasharray="1 1"/><line x1="11.5" y1="6" x2="11.5" y2="16" stroke="#aaa" stroke-dasharray="1 1"/><line x1="7" y1="10.5" x2="16" y2="10.5" stroke="#aaa" stroke-dasharray="1 1"/><line x1="6" y1="4" x2="6" y2="17" stroke="#333" stroke-width="2"/></svg></div>
<div class="a bb" style="left:916px;top:383px;"><svg width="23" height="21" viewBox="0 0 23 21"><rect x="6.5" y="5.5" width="10" height="10" fill="#f4f4ee" stroke="#999" stroke-dasharray="1 1"/><line x1="11.5" y1="6" x2="11.5" y2="16" stroke="#aaa" stroke-dasharray="1 1"/><line x1="7" y1="10.5" x2="16" y2="10.5" stroke="#aaa" stroke-dasharray="1 1"/><line x1="11.5" y1="4" x2="11.5" y2="17" stroke="#333" stroke-width="2"/></svg></div>
<div class="a bb" style="left:978px;top:383px;"><svg width="23" height="21" viewBox="0 0 23 21"><rect x="6.5" y="5.5" width="10" height="10" fill="#f4f4ee" stroke="#999" stroke-dasharray="1 1"/><line x1="11.5" y1="6" x2="11.5" y2="16" stroke="#aaa" stroke-dasharray="1 1"/><line x1="7" y1="10.5" x2="16" y2="10.5" stroke="#aaa" stroke-dasharray="1 1"/><line x1="17" y1="4" x2="17" y2="17" stroke="#333" stroke-width="2"/></svg></div>
<div class="a bb" style="left:1016px;top:383px;"><svg width="23" height="21" viewBox="0 0 23 21"><line x1="5" y1="4" x2="18" y2="17" stroke="#333" stroke-width="1.5"/></svg></div>

<div class="t d" style="left:665px;top:421px;font-size:10.6px;letter-spacing:0.11px;color:#000;line-height:13px;">The selected border style can be applied by clicking the presets, preview diagram or the buttons<br>above.</div>

<div class="a btn foc" style="left:993px;top:542px;width:74px;height:22px;">OK</div>
<div class="a btn" style="left:1077px;top:542px;width:75px;height:22px;">Cancel</div>

<!-- sheet tabs bar -->
<div class="a" style="left:4px;top:884px;width:64px;height:16px;background:linear-gradient(#dfe3e8,#eef0f3);"></div>
<svg class="a" style="left:4px;top:884px" width="64" height="16" viewBox="0 0 64 16"><g fill="#555"><rect x="8" y="4" width="1.5" height="8"/><path d="M15 4 L10 8 L15 12Z"/><path d="M31 4 L26 8 L31 12Z"/><path d="M40 4 L45 8 L40 12Z"/><path d="M51 4 L56 8 L51 12Z"/><rect x="57" y="4" width="1.5" height="8"/></g></svg>
<svg class="a" style="left:68px;top:884px" width="210" height="16" viewBox="0 0 210 16">
 <path d="M122 0 L128 15 L182 15 L188 0" fill="#e7eaee" stroke="#a6acb4" stroke-width="1"/>
 <path d="M60 0 L66 15 L120 15 L126 0" fill="#e7eaee" stroke="#a6acb4" stroke-width="1"/>
 <path d="M0 0 L4 15 L58 15 L64 0" fill="#fff" stroke="#a6acb4" stroke-width="1"/>
 <path d="M184 0 L190 15 L206 15 L210 0" fill="#e7eaee" stroke="#a6acb4" stroke-width="1"/>
</svg>
<div class="t" style="left:70px;top:884px;width:56px;text-align:center;font-size:12.5px;font-weight:bold;color:#333;line-height:17px;">Sheet1</div>
<div class="t" style="left:127px;top:884px;width:60px;text-align:center;font-size:12.5px;color:#555;line-height:17px;">Sheet2</div>
<div class="t" style="left:189px;top:884px;width:60px;text-align:center;font-size:12.5px;color:#555;line-height:17px;">Sheet3</div>
<div class="a" style="left:262px;top:887px;width:11px;height:10px;background:#dfe6f2;border:1px solid #7a8aa6;box-sizing:border-box;"></div>
<div class="a" style="left:259px;top:885px;width:5px;height:5px;background:#f2c94c;border-radius:3px;"></div>
<!-- horizontal scrollbar -->
<div class="a" style="left:757px;top:885px;width:6px;height:14px;border:1px solid #8f969e;border-radius:2px;background:#f4f5f7;box-sizing:border-box;"></div>
<svg class="a" style="left:766px;top:884px" width="12" height="16" viewBox="0 0 12 16"><path d="M8 4 L3 8 L8 12Z" fill="#333"/></svg>
<div class="a" style="left:780px;top:885px;width:433px;height:14px;background:linear-gradient(#fdfdfd,#eef0f3);border:1px solid #a5acb5;border-radius:2px;box-sizing:border-box;"></div>
<div class="a" style="left:994px;top:889px;width:6px;height:7px;border-left:1px solid #999;border-right:1px solid #999;background:linear-gradient(90deg,transparent 2px,#999 2px,#999 3px,transparent 3px);"></div>
<div class="a" style="left:1213px;top:885px;width:28px;height:14px;background:#e9ecef;"></div>
<svg class="a" style="left:1240px;top:884px" width="12" height="16" viewBox="0 0 12 16"><path d="M4 4 L9 8 L4 12Z" fill="#333"/></svg>
<div class="a" style="left:1253px;top:885px;width:6px;height:14px;border:1px solid #8f969e;border-radius:2px;background:#f4f5f7;box-sizing:border-box;"></div>
<!-- vertical scrollbar -->
<div class="a" style="left:1260px;top:171px;width:16px;height:6px;border:1px solid #8f969e;border-radius:2px;background:#f4f5f7;box-sizing:border-box;"></div>
<svg class="a" style="left:1260px;top:178px" width="16" height="14" viewBox="0 0 16 14"><path d="M3 10 L8 5 L13 10Z" fill="#333"/></svg>
<div class="a" style="left:1260px;top:194px;width:16px;height:651px;background:linear-gradient(90deg,#f8f9fa,#eef0f3);border:1px solid #a5acb5;border-radius:2px;box-sizing:border-box;"></div>
<svg class="a" style="left:1260px;top:868px" width="16" height="14" viewBox="0 0 16 14"><path d="M3 4 L8 9 L13 4Z" fill="#333"/></svg>
<!-- status bar -->
<div class="t" style="left:8px;top:899px;width:40px;text-align:center;font-size:12px;color:#444;line-height:23px;">Ready</div>
<div class="a" style="left:52px;top:902px;width:1px;height:17px;background:#b9bec5;"></div>
<div class="a" style="left:62px;top:903px;width:17px;height:14px;background:linear-gradient(#fff,#c9d6ea);border:1px solid #6b7c98;box-sizing:border-box;"></div>
<div class="a" style="left:60px;top:901px;width:6px;height:6px;background:#d9534f;border-radius:3px;"></div>
<div class="a" style="left:87px;top:902px;width:1px;height:17px;background:#b9bec5;"></div>
<div class="t" style="left:958px;top:899px;font-size:12px;color:#444;line-height:23px;">Count: 72</div>
<div class="a" style="left:1026px;top:902px;width:16px;height:17px;background:linear-gradient(#fdeaa8,#f6cf66);border:1px solid #d9ae4c;box-sizing:border-box;"></div>
<div class="a" style="left:1030px;top:905px;width:8px;height:11px;border-left:1px solid #666;border-right:1px solid #666;box-sizing:border-box;background:linear-gradient(90deg,transparent 3px,#666 3px,#666 4px,transparent 4px);"></div>
<div class="a" style="left:1046px;top:904px;width:14px;height:13px;background:#9aa6b3;border:1px solid #6b7480;box-sizing:border-box;"></div>
<div class="a" style="left:1049px;top:907px;width:8px;height:7px;background:#d9e2ea;"></div>
<div class="a" style="left:1064px;top:904px;width:15px;height:13px;background:#f1f3f5;border:1px solid #6b7480;box-sizing:border-box;background-image:linear-gradient(90deg,transparent 6px,#6b7480 6px,#6b7480 7px,transparent 7px);"></div>
<div class="t" style="left:1089px;top:899px;font-size:12px;color:#444;line-height:23px;">100%</div>
<div class="a" style="left:1127px;top:903px;width:15px;height:15px;border-radius:8px;border:1px solid #7d858f;background:linear-gradient(#fff,#dde1e6);box-sizing:border-box;"></div>
<div class="a" style="left:1131px;top:910px;width:7px;height:1.5px;background:#444;"></div>
<div class="a" style="left:1142px;top:910px;width:100px;height:1px;background:#9aa1aa;"></div>
<div class="a" style="left:1187px;top:903px;width:9px;height:14px;border:1px solid #7d858f;border-radius:4px 4px 5px 5px;background:#fff;box-sizing:border-box;"></div>
<div class="a" style="left:1243px;top:903px;width:15px;height:15px;border-radius:8px;border:1px solid #7d858f;background:linear-gradient(#fff,#dde1e6);box-sizing:border-box;"></div>
<div class="a" style="left:1247px;top:910px;width:7px;height:1.5px;background:#444;"></div>
<div class="a" style="left:1250px;top:907px;width:1.5px;height:7px;background:#444;"></div>
<div class="a" style="left:1266px;top:912px;width:6px;height:6px;background:radial-gradient(circle,#9aa 1px,transparent 1.5px);background-size:3px 3px;"></div>

<!-- taskbar -->

<div class="a" style="left:0;top:930px;width:96px;height:30px;border-radius:0 10px 0 0;background:linear-gradient(#5cbd5f 0%,#3ba63f 15%,#2f9a35 60%,#2a8a30 100%);box-shadow:inset -2px 0 2px #1e6d24;"></div>
<svg class="a" style="left:10px;top:934px" width="22" height="22" viewBox="0 0 22 22"><path d="M2 3 Q6 1 10 3 L9 10 Q5 8 1 10Z" fill="#f15a24"/><path d="M12 3 Q16 5 20 3 L19 10 Q15 12 11 10Z" fill="#7cc242"/><path d="M1 12 Q5 10 9 12 L8 19 Q4 17 0 19Z" fill="#1e9ce8"/><path d="M11 12 Q15 14 19 12 L18 19 Q14 21 10 19Z" fill="#fdd20a"/></svg>
<div class="t" style="left:35px;top:933px;font-size:18px;font-weight:bold;font-style:italic;color:#fff;text-shadow:1px 1px 1px #1b4f1e;">start</div>
<div class="a" style="left:120px;top:937px;width:15px;height:15px;background:#3aa44a;border:1px solid #e6f3e6;box-sizing:border-box;"></div>
<div class="t" style="left:123px;top:937px;font-size:10px;font-weight:bold;color:#fff;">µ</div>
<svg class="a" style="left:141px;top:936px" width="18" height="18" viewBox="0 0 18 18"><path d="M3 14 Q2 4 14 3" fill="none" stroke="#cfe7ff" stroke-width="2.5"/><circle cx="10" cy="10" r="5" fill="none" stroke="#4aa7ef" stroke-width="2.5"/></svg>
<div class="a" style="left:165px;top:937px;width:15px;height:15px;border-radius:8px;background:radial-gradient(circle at 40% 40%,#eaf3ff,#8bb5e6);"></div>
<div class="a" style="left:189px;top:937px;width:15px;height:15px;border-radius:8px;background:radial-gradient(circle at 45% 45%,#ffe2a0,#e66a1e 60%,#b54612);"></div>
<div class="a" style="left:210px;top:939px;width:16px;height:12px;border-radius:2px;background:linear-gradient(#fff6cf,#e8c96b);"></div>
<div class="t" style="left:246px;top:931px;font-size:9px;color:#bcd2f7;">»</div>
<div class="a" style="left:270px;top:935px;width:157px;height:25px;border-radius:3px 3px 0 0;background:linear-gradient(#5c98f6,#3c7ff0 20%,#3a79ec 80%,#3270e2);box-shadow:inset 1px 1px 0 #7fb0ff;"></div>
<svg class="a" style="left:276px;top:939px" width="17" height="17" viewBox="0 0 17 17"><circle cx="8.5" cy="8.5" r="7.5" fill="#db4437"/><path d="M8.5 8.5 L16 8.5 A7.5 7.5 0 0 1 4 14.5Z" fill="#fbbc05"/><path d="M8.5 8.5 L4 14.5 A7.5 7.5 0 0 1 1.5 5Z" fill="#0f9d58"/><circle cx="8.5" cy="8.5" r="3.3" fill="#4285f4" stroke="#fff" stroke-width="1.3"/></svg>
<div class="t" style="left:297px;top:940px;font-size:11.5px;color:#fff;">Aula.bg - Question - ...</div>
<div class="a" style="left:429px;top:935px;width:161px;height:25px;border-radius:3px 3px 0 0;background:linear-gradient(#1e4fc0,#1d4cb8 50%,#1a47b0);box-shadow:inset 1px 1px 1px #102f80;"></div>
<div class="a" style="left:439px;top:939px;width:15px;height:16px;background:linear-gradient(#bde7b5,#5ab45a);border:1px solid #e7f5e3;box-sizing:border-box;"></div>
<div class="t" style="left:442px;top:939px;font-size:12px;font-weight:bold;color:#1d5f22;">X</div>
<div class="t" style="left:459px;top:940px;font-size:11.5px;color:#fff;">Microsoft Excel - Book1</div>
<div class="t" style="left:1096px;top:939px;font-size:11px;color:#dbe8fb;">BG</div>
<div class="a" style="left:1119px;top:938px;width:13px;height:15px;background:#fff;border:1px solid #c9d3e3;box-sizing:border-box;"></div>
<div class="t" style="left:1121px;top:938px;font-size:11px;font-weight:bold;color:#333;">?</div>
<svg class="a" style="left:1141px;top:934px" width="16" height="20" viewBox="0 0 16 20"><circle cx="8" cy="5" r="3" fill="none" stroke="#d7e5fb" stroke-width="1.5"/><rect x="6" y="15" width="4" height="3" fill="#fff"/></svg>
<div class="a" style="left:1163px;top:923px;width:117px;height:37px;background:linear-gradient(#1a9cf0,#0f8ae2 20%,#0d84dc 80%,#0a78d0);border-left:1px solid #0b58c0;box-shadow:inset 1px 0 0 #30b5f8;"></div>
<div class="a" style="left:1166px;top:938px;width:14px;height:14px;border-radius:7px;background:radial-gradient(circle at 40% 40%,#dff0ff,#2f86d6);"></div>
<div class="a" style="left:1184px;top:938px;width:14px;height:14px;background:linear-gradient(135deg,#3a3e9a,#d03c3c 50%,#3a3e9a);"></div>
<div class="a" style="left:1205px;top:938px;width:14px;height:14px;border-radius:3px;background:linear-gradient(#eaffd8,#9ad47a);"></div>
<div class="a" style="left:1222px;top:937px;width:15px;height:15px;border-radius:8px;background:radial-gradient(circle at 45% 45%,#ffd7a0,#e07820 60%,#b85210);"></div>
<div class="t" style="left:1240px;top:939px;font-size:11.5px;color:#fff;">10:05</div>
<svg class="a" style="left:0;top:0" width="1280" height="960" viewBox="0 0 1280 960"><line x1="520.8" y1="157.3" x2="629.4" y2="136.5" stroke="#b9455a" stroke-width="7"/>
<path d="M650.5 132.5 L621.2 154.9 L629.4 136.5 L615.0 122.5Z" fill="#b9455a"/>
<circle cx="504.6" cy="160.4" r="16.5" fill="#fff" stroke="#b9455a" stroke-width="8"/>
<text x="504.6" y="166.9" font-size="19" text-anchor="middle" fill="#8a8a8a" font-family="Liberation Serif">1</text><line x1="891.6" y1="664.3" x2="982.6" y2="581.4" stroke="#b9455a" stroke-width="7"/>
<path d="M998.5 567.0 L985.2 601.4 L982.6 581.4 L963.0 577.0Z" fill="#b9455a"/>
<circle cx="879" cy="675.7" r="17" fill="#fff" stroke="#b9455a" stroke-width="8"/>
<text x="879" y="682.2" font-size="19" text-anchor="middle" fill="#8a8a8a" font-family="Liberation Serif">2</text></svg>
</div>
</body></html>
